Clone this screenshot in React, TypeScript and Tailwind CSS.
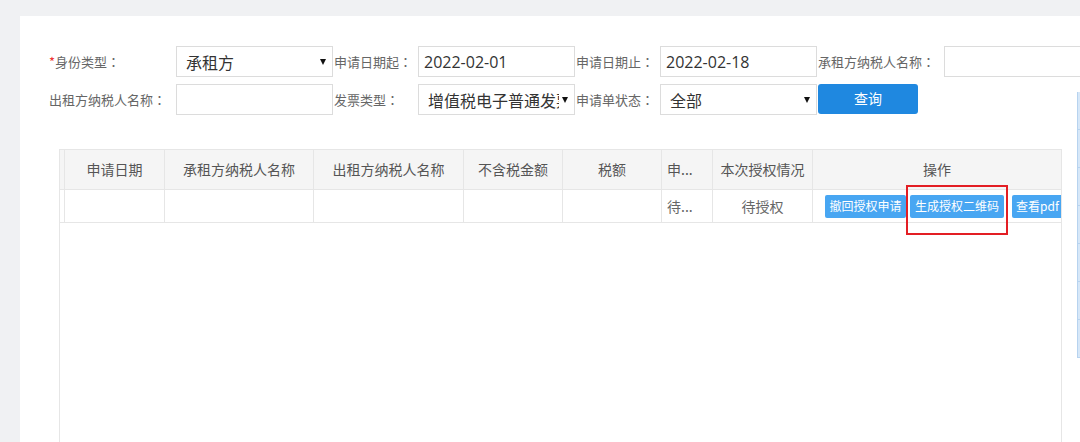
import React from 'react';

const Colon = () => <span className="font-['Noto_Sans_CJK_TC',sans-serif]">：</span>;

const Label = ({ w, children }: { w: string; children: React.ReactNode }) => (
  <div className={`${w} shrink-0 pl-[1px] text-[13px] text-[#666] whitespace-nowrap leading-none`}>
    {children}
    <Colon />
  </div>
);

const TextBox = ({ value = '' }: { value?: string }) => (
  <div className="w-[157px] h-[31px] shrink-0 border border-[#dcdcdc] bg-white flex items-center pl-[5px] text-[16px] text-[#333] font-['Open_Sans','Noto_Sans_CJK_SC',sans-serif] whitespace-nowrap">
    {value}
  </div>
);

const SelectBox = ({ value }: { value: string }) => (
  <div className="w-[157px] h-[31px] shrink-0 border border-[#dcdcdc] bg-white flex items-center pl-[9px] pr-[6px] text-[16px] text-[#333]">
    <span className="flex-1 overflow-hidden whitespace-nowrap mr-[3px]">{value}</span>
    <span className="shrink-0 w-0 h-0 border-l-[3.5px] border-r-[3.5px] border-t-[6px] border-l-transparent border-r-transparent border-t-[#111]" />
  </div>
);

const headers = ['', '申请日期', '承租方纳税人名称', '出租方纳税人名称', '不含税金额', '税额', '申...', '本次授权情况', '操作'];

export default function App() {
  return (
    <div className="relative w-[1080px] h-[442px] overflow-hidden bg-[#f0f1f3] pt-[16px] pl-[20px] font-['Noto_Sans_CJK_SC',sans-serif]">
      <div className="h-full bg-white pt-[30px] pl-[28px] overflow-hidden">
        {/* 查询条件 */}
        <div className="flex items-center h-[31px]">
          <Label w="w-[128px]">
            <span className="text-[#e33]">*</span>身份类型
          </Label>
          <SelectBox value="承租方" />
          <Label w="w-[85px]">申请日期起</Label>
          <TextBox value="2022-02-01" />
          <Label w="w-[85px]">申请日期止</Label>
          <TextBox value="2022-02-18" />
          <Label w="w-[127px]">承租方纳税人名称</Label>
          <TextBox />
        </div>
        <div className="flex items-center h-[31px] mt-[7px]">
          <Label w="w-[128px]">出租方纳税人名称</Label>
          <TextBox />
          <Label w="w-[85px]">发票类型</Label>
          <SelectBox value="增值税电子普通发票" />
          <Label w="w-[85px]">申请单状态</Label>
          <SelectBox value="全部" />
          <button className="ml-[1px] w-[100px] h-[30px] shrink-0 rounded-[3px] bg-[#1f88e0] text-white text-[14px] -mt-[2px]">
            查询
          </button>
        </div>

        {/* 列表 */}
        <div className="mt-[34px] ml-[11px] w-[1003px] h-[320px] border-l border-t border-r border-[#e6e6e6]">
          <div className="grid grid-cols-[5px_100px_149px_150px_99px_99px_51px_100px_248px]">
            {headers.map((h, i) => (
              <div
                key={i}
                className={`h-[40px] bg-[#f5f5f5] border-b border-[#e6e6e6] ${i < 8 ? 'border-r' : ''} flex items-center ${i === 6 ? 'justify-start pl-[5px]' : 'justify-center'} text-[14px] text-[#555] whitespace-nowrap`}
              >
                {h}
              </div>
            ))}
            <div className="h-[33px] border-r border-b border-[#e6e6e6]" />
            <div className="h-[33px] border-r border-b border-[#e6e6e6]" />
            <div className="h-[33px] border-r border-b border-[#e6e6e6]" />
            <div className="h-[33px] border-r border-b border-[#e6e6e6]" />
            <div className="h-[33px] border-r border-b border-[#e6e6e6]" />
            <div className="h-[33px] border-r border-b border-[#e6e6e6]" />
            <div className="h-[33px] border-r border-b border-[#e6e6e6] flex items-center pl-[5px] text-[14px] text-[#666] whitespace-nowrap">
              待...
            </div>
            <div className="h-[33px] border-r border-b border-[#e6e6e6] flex items-center justify-center text-[14px] text-[#666]">
              待授权
            </div>
            <div className="h-[33px] border-b border-[#e6e6e6] flex items-center pl-[12px] gap-[4px] overflow-hidden">
              <button className="shrink-0 w-[81px] h-[23px] rounded-[2px] bg-[#48a6f2] text-white text-[12px] whitespace-nowrap">撤回授权申请</button>
              <button className="shrink-0 w-[94px] h-[23px] rounded-[2px] bg-[#48a6f2] text-white text-[12px] whitespace-nowrap">生成授权二维码</button>
              <button className="shrink-0 ml-[4px] w-[60px] h-[23px] rounded-[2px] bg-[#48a6f2] text-white text-[12px] whitespace-nowrap text-left pl-[4px]">查看pdf</button>
            </div>
          </div>
        </div>
      </div>

      {/* 标注框 */}
      <div className="absolute left-[906px] top-[185px] w-[102px] h-[50px] border-2 border-[#e31e24]" />

      {/* 右侧被裁切的面板 */}
      <div className="absolute left-[1077px] top-[92px] w-[3px] flex flex-col border-l border-[#b7d3ef]">
        {[0, 1, 2, 3, 4, 5, 6].map((i) => (
          <div key={i} className="h-[38px] bg-[#d6e7f8] border-b border-[#b7d3ef]" />
        ))}
      </div>
    </div>
  );
}
